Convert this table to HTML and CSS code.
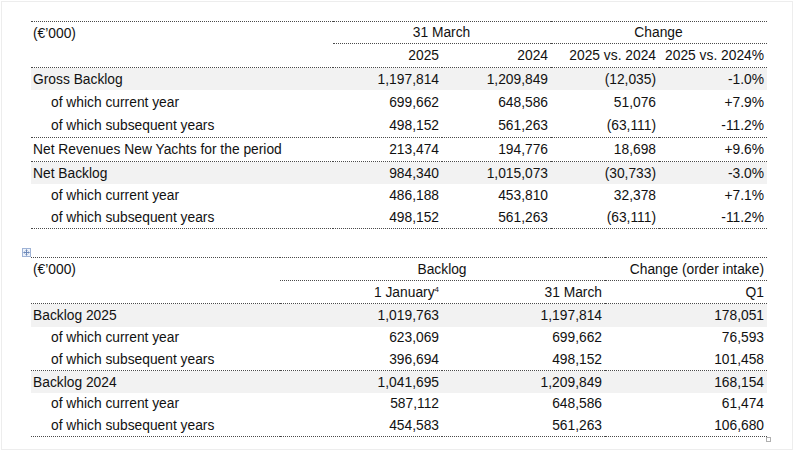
FILE: index.html
```html
<!DOCTYPE html>
<html lang="en">
<head>
<meta charset="utf-8">
<title>Backlog</title>
<link rel="stylesheet" href="styles.css">
</head>
<body>
<div class="page">
  <table class="tbl t1">
    <colgroup><col class="c-label1"><col class="c-n1"><col class="c-n1"><col class="c-n2"><col class="c-n2"></colgroup>
    <tr class="h1">
      <td class="lbl">(€’000)</td>
      <td class="ctr ul" colspan="2">31 March</td>
      <td class="ctr ul" colspan="2">Change</td>
    </tr>
    <tr class="h2 sep">
      <td></td><td class="num">2025</td><td class="num">2024</td><td class="num">2025 vs. 2024</td><td class="num">2025 vs. 2024%</td>
    </tr>
    <tr class="r22 shade"><td class="lbl">Gross Backlog</td><td class="num">1,197,814</td><td class="num">1,209,849</td><td class="num">(12,035)</td><td class="num">-1.0%</td></tr>
    <tr class="r24"><td class="lbl sub">of which current year</td><td class="num">699,662</td><td class="num">648,586</td><td class="num">51,076</td><td class="num">+7.9%</td></tr>
    <tr class="r24 sep"><td class="lbl sub">of which subsequent years</td><td class="num">498,152</td><td class="num">561,263</td><td class="num">(63,111)</td><td class="num">-11.2%</td></tr>
    <tr class="r24 sep"><td class="lbl">Net Revenues New Yachts for the period</td><td class="num">213,474</td><td class="num">194,776</td><td class="num">18,698</td><td class="num">+9.6%</td></tr>
    <tr class="r22 shade"><td class="lbl">Net Backlog</td><td class="num">984,340</td><td class="num">1,015,073</td><td class="num">(30,733)</td><td class="num">-3.0%</td></tr>
    <tr class="r22"><td class="lbl sub">of which current year</td><td class="num">486,188</td><td class="num">453,810</td><td class="num">32,378</td><td class="num">+7.1%</td></tr>
    <tr class="r23 sep"><td class="lbl sub">of which subsequent years</td><td class="num">498,152</td><td class="num">561,263</td><td class="num">(63,111)</td><td class="num">-11.2%</td></tr>
  </table>

  <div class="t2wrap">
    <svg class="move" width="9" height="9" viewBox="0 0 9 9" aria-hidden="true">
      <rect x="0.5" y="0.5" width="8" height="8" fill="#eef3fb" stroke="#9fb3d6"/>
      <path d="M4.5 2v5M2 4.5h5" stroke="#6d88b8" stroke-width="1"/>
      <path d="M3.5 2.5l1-1 1 1M3.5 6.5l1 1 1-1M2.5 3.5l-1 1 1 1M6.5 3.5l1 1-1 1" fill="none" stroke="#6d88b8" stroke-width="0.8"/>
    </svg>
    <table class="tbl t2">
      <colgroup><col class="c-label2"><col class="c-m1"><col class="c-m2"><col class="c-m1"></colgroup>
      <tr class="h1b">
        <td class="lbl">(€’000)</td>
        <td class="ctr ul" colspan="2">Backlog</td>
        <td class="num ul">Change (order intake)</td>
      </tr>
      <tr class="h2b sep">
        <td></td><td class="num">1 January<sup>4</sup></td><td class="num">31 March</td><td class="num">Q1</td>
      </tr>
      <tr class="r23 shade"><td class="lbl">Backlog 2025</td><td class="num">1,019,763</td><td class="num">1,197,814</td><td class="num">178,051</td></tr>
      <tr class="r21"><td class="lbl sub">of which current year</td><td class="num">623,069</td><td class="num">699,662</td><td class="num">76,593</td></tr>
      <tr class="r23 sep"><td class="lbl sub">of which subsequent years</td><td class="num">396,694</td><td class="num">498,152</td><td class="num">101,458</td></tr>
      <tr class="r22 shade"><td class="lbl">Backlog 2024</td><td class="num">1,041,695</td><td class="num">1,209,849</td><td class="num">168,154</td></tr>
      <tr class="r21"><td class="lbl sub">of which current year</td><td class="num">587,112</td><td class="num">648,586</td><td class="num">61,474</td></tr>
      <tr class="r23 sep"><td class="lbl sub">of which subsequent years</td><td class="num">454,583</td><td class="num">561,263</td><td class="num">106,680</td></tr>
    </table>
    <span class="resize"></span>
  </div>
</div>
</body>
</html>
```

FILE: styles.css
```css
html, body {
  margin: 0;
  padding: 0;
  background: #ffffff;
}

.page {
  margin: 1px;
  width: 792px;
  height: 449px;
  box-sizing: border-box;
  border: 1px solid #ededed;
  padding: 19px 0 0 29px;
  font-family: "Liberation Sans", Arial, sans-serif;
  font-size: 13.8px;
  color: #111111;
}

.tbl {
  border-collapse: separate;
  border-spacing: 0;
  table-layout: fixed;
  width: 736px;
}

.tbl td {
  box-sizing: border-box;
  padding: 0 3px 0 2px;
  vertical-align: middle;
  white-space: nowrap;
  line-height: 15px;
}

.c-label1 { width: 302px; }
.c-n1 { width: 109px; }
.c-n2 { width: 108px; }
.c-label2 { width: 249px; }
.c-m1 { width: 162px; }
.c-m2 { width: 163px; }

.tbl tr:first-child td {
  border-top: 1px dotted #4a4a4a;
}

.tbl .ul {
  border-bottom: 1px dotted #4a4a4a;
}

.tbl tr.sep td {
  border-bottom: 1px dotted #4a4a4a;
}

.lbl { text-align: left; }
.sub { padding-left: 20px !important; }
.num { text-align: right; }
.ctr { text-align: center; }

.shade td { background: #f2f2f2; }

.h1 td { height: 23px; }
.h2 td { height: 24px; }
.h1b td { height: 24px; }
.h2b td { height: 23px; }
.r21 td { height: 21px; }
.r22 td { height: 22px; }
.r23 td { height: 23px; }
.r24 td { height: 24px; }

sup {
  font-size: 8px;
  line-height: 0;
  vertical-align: 5px;
}

.t2wrap {
  position: relative;
  margin-top: 28px;
  width: 736px;
}

.move {
  position: absolute;
  left: -9px;
  top: -9px;
  display: block;
}

.resize {
  position: absolute;
  right: -4px;
  bottom: -5px;
  width: 3px;
  height: 3px;
  border: 1px solid #b0b0b0;
  background: #fff;
}
```
